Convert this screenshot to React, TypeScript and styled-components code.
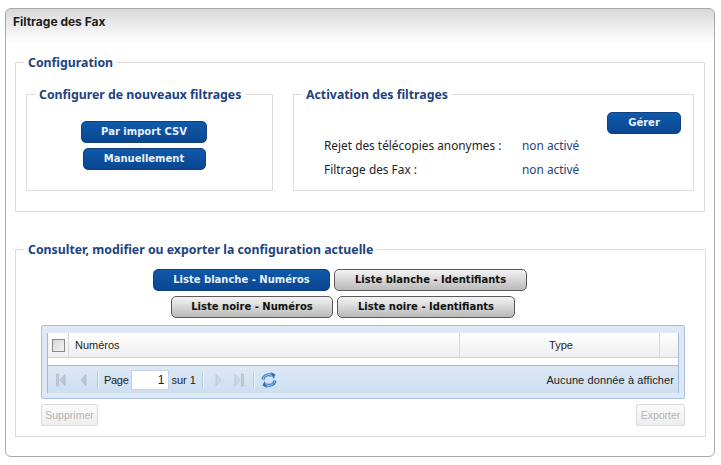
import React from 'react';
import styled, { createGlobalStyle } from 'styled-components';

const GlobalStyle = createGlobalStyle`
  html, body {
    margin: 0;
    padding: 0;
    background: #fff;
  }
`;

const Page = styled.div`
  padding: 8px 6px 8px 5px;
  width: 721px;
  height: 465px;
  box-sizing: border-box;
`;

const Panel = styled.div`
  box-sizing: border-box;
  width: 710px;
  height: 449px;
  border: 1px solid #a9a9a9;
  border-radius: 6px;
  background: linear-gradient(#d9d9d9 0, #ffffff 34px);
  padding: 0 9px;
`;

const Title = styled.h1`
  box-sizing: border-box;
  margin: 0 0 0 -2px;
  height: 44px;
  padding: 5px 0 0 0;
  font: bold 12px/15px Inter, "Noto Sans", sans-serif;
  color: #1c1c1c;
`;

const Box = styled.fieldset<{ $width: number; $height: number }>`
  box-sizing: border-box;
  margin: 0;
  padding: 0;
  width: ${p => p.$width}px;
  height: ${p => p.$height}px;
  border: 1px solid #dcdcdc;
  min-width: 0;
`;

const Legend = styled.legend`
  margin-left: 8px;
  padding: 2px 4px 0 4px;
  font: bold 12.3px/16px "Noto Sans", "Open Sans", sans-serif;
  color: #1c4480;
`;

const ConfigRow = styled.div`
  display: flex;
  gap: 20px;
  padding: 14px 0 0 10px;
`;

const CenterStack = styled.div`
  display: flex;
  flex-direction: column;
  align-items: center;
  gap: 5px;
  padding: 18px 11px 0 0;
`;

const Action = styled.button<{ $width: number; $tone?: 'blue' | 'grey' }>`
  box-sizing: border-box;
  width: ${p => p.$width}px;
  height: 22px;
  padding: 0;
  border-radius: 5px;
  border: 1px solid ${p => (p.$tone === 'grey' ? '#5a5a5a' : '#123f7e')};
  background: ${p =>
    p.$tone === 'grey'
      ? 'linear-gradient(#f4f4f4, #b9b9b9)'
      : 'linear-gradient(#0f5aaa, #0a4691)'};
  color: ${p => (p.$tone === 'grey' ? '#111' : '#e8f0fb')};
  font: bold 10px/18px "DejaVu Sans", sans-serif;
  white-space: nowrap;
`;

const ManageBar = styled.div`
  display: flex;
  justify-content: flex-end;
  padding: 9px 12px 0 0;
  margin-bottom: -1px;
`;

const StatusRow = styled.div`
  display: flex;
  height: 24px;
  padding-left: 30px;
  align-items: center;
  font: 11.85px/16px "Noto Sans", sans-serif;
  color: #222;
`;

const StatusLabel = styled.span`
  width: 198px;
`;

const StatusValue = styled.span`
  color: #1c4480;
`;

const Spacer = styled.div`
  height: 28px;
`;

const ListRows = styled.div`
  display: flex;
  flex-direction: column;
  gap: 5px;
  padding-top: 11px;
`;

const ListRow = styled.div<{ $left: number }>`
  display: flex;
  gap: 4px;
  padding-left: ${p => p.$left}px;
`;

const Grid = styled.div`
  box-sizing: border-box;
  margin: 7px 0 0 25px;
  width: 644px;
  height: 74px;
  padding: 7px 5px 5px;
  background: #dfe9f6;
  border: 1px solid #a9c1de;
  border-radius: 2px;
`;

const GridInner = styled.div`
  border: 1px solid #a3bbd6;
  border-top: 0;
  background: #fff;
  height: 100%;
  box-sizing: border-box;
`;

const HeadRow = styled.div`
  display: grid;
  grid-template-columns: 21px 391px 200px 1fr;
  height: 24px;
  background: linear-gradient(#ffffff, #eeeeee);
  border-bottom: 1px solid #d4d4d4;
`;

const HeadCell = styled.div<{ $center?: boolean }>`
  display: flex;
  align-items: center;
  justify-content: ${p => (p.$center ? 'center' : 'flex-start')};
  padding-left: ${p => (p.$center ? 3 : 6)}px;
  border-right: 1px solid #d8d8d8;
  font: 11px/14px "Liberation Sans", Arial, sans-serif;
  color: #222;
  &:last-child {
    border-right: 0;
  }
`;

const CheckBox = styled.span`
  display: block;
  box-sizing: border-box;
  width: 13px;
  height: 13px;
  margin-left: -2px;
  border: 1px solid #8a8a8a;
  background: linear-gradient(135deg, #d8d8d8, #f4f4f4);
`;

const EmptyBody = styled.div`
  height: 7px;
  border-bottom: 1px solid #a3bbd6;
`;

const Toolbar = styled.div`
  display: flex;
  align-items: center;
  height: 27px;
  background: linear-gradient(#dde8f5, #cddff1);
  font: 11px/14px "Liberation Sans", Arial, sans-serif;
  color: #222;
  padding-left: 8px;
`;

const Pager = styled.span<{ $left?: number }>`
  display: inline-flex;
  margin-left: ${p => p.$left ?? 0}px;
`;

const PageLabel = styled.span`
  margin-left: 6px;
  letter-spacing: -0.3px;
`;

const Divider = styled.span<{ $left: number }>`
  width: 1px;
  height: 18px;
  margin-left: ${p => p.$left}px;
  background: #b5cbe2;
  box-shadow: 1px 0 0 #eef4fb;
`;

const PageInput = styled.input`
  box-sizing: border-box;
  width: 38px;
  height: 20px;
  margin: 0 3px 0 2px;
  padding: 0 3px;
  border: 1px solid #c5d4e6;
  background: #fff;
  text-align: right;
  font: 12px/16px "Liberation Sans", Arial, sans-serif;
  color: #222;
`;

const Message = styled.span`
  margin-left: auto;
  padding-right: 4px;
  font: 11px/14px "Liberation Sans", Arial, sans-serif;
  letter-spacing: 0.1px;
`;

const FooterBar = styled.div`
  display: flex;
  justify-content: space-between;
  margin: 5px 0 0 25px;
  width: 644px;
`;

const Disabled = styled.button<{ $width: number }>`
  box-sizing: border-box;
  width: ${p => p.$width}px;
  height: 22px;
  padding: 0;
  border: 1px solid #dcdcdc;
  border-radius: 2px;
  background: linear-gradient(#fbfbfb, #eeeeee);
  color: #b4b4b4;
  font: 10.5px/18px "Liberation Sans", Arial, sans-serif;
`;

const FirstIcon = () => (
  <svg width="10" height="14" viewBox="0 0 10 14">
    <rect x="0.5" y="1" width="2" height="12" fill="#c3ccd6" stroke="#aab5c2" strokeWidth="0.6" />
    <path d="M9 1.5v11L4 7z" fill="#bcc6d1" stroke="#a5b0bd" strokeWidth="0.6" />
  </svg>
);

const PrevIcon = () => (
  <svg width="7" height="14" viewBox="0 0 7 14">
    <path d="M6 1.5v11L1 7z" fill="#bcc6d1" stroke="#a5b0bd" strokeWidth="0.6" />
  </svg>
);

const NextIcon = () => (
  <svg width="7" height="14" viewBox="0 0 7 14">
    <path d="M1 1.5v11L6 7z" fill="#cfd8e2" stroke="#b3bfcb" strokeWidth="0.6" />
  </svg>
);

const LastIcon = () => (
  <svg width="10" height="14" viewBox="0 0 10 14">
    <path d="M1 1.5v11L6 7z" fill="#cfd8e2" stroke="#b3bfcb" strokeWidth="0.6" />
    <rect x="7.5" y="1" width="2" height="12" fill="#c3ccd6" stroke="#aab5c2" strokeWidth="0.6" />
  </svg>
);

const RefreshIcon = () => (
  <svg width="16" height="16" viewBox="0 0 16 16" fill="none">
    <path d="M2 7.5C2.5 3.5 7 1.5 11 3.5" stroke="#2a70c2" strokeWidth="3" />
    <path d="M9.5 0l5 2.6-2 4.4z" fill="#2a70c2" />
    <path d="M2 7.5C2.5 3.5 7 1.5 11 3.5" stroke="#8cc6f2" strokeWidth="1.2" />
    <path d="M14 8.5C13.5 12.5 9 14.5 5 12.5" stroke="#2a70c2" strokeWidth="3" />
    <path d="M6.5 16l-5-2.6 2-4.4z" fill="#2a70c2" />
    <path d="M14 8.5C13.5 12.5 9 14.5 5 12.5" stroke="#8cc6f2" strokeWidth="1.2" />
  </svg>
);

export default function App() {
  return (
    <>
      <GlobalStyle />
      <Page>
        <Panel>
          <Title>Filtrage des Fax</Title>
          <Box $width={690} $height={159}>
            <Legend>Configuration</Legend>
            <ConfigRow>
              <Box $width={247} $height={106}>
                <Legend>Configurer de nouveaux filtrages</Legend>
                <CenterStack>
                  <Action $width={126}>Par import CSV</Action>
                  <Action $width={123}>Manuellement</Action>
                </CenterStack>
              </Box>
              <Box $width={401} $height={106}>
                <Legend>Activation des filtrages</Legend>
                <ManageBar>
                  <Action $width={74}>Gérer</Action>
                </ManageBar>
                <StatusRow>
                  <StatusLabel>Rejet des télécopies anonymes :</StatusLabel>
                  <StatusValue>non activé</StatusValue>
                </StatusRow>
                <StatusRow>
                  <StatusLabel>Filtrage des Fax :</StatusLabel>
                  <StatusValue>non activé</StatusValue>
                </StatusRow>
              </Box>
            </ConfigRow>
          </Box>
          <Spacer />
          <Box $width={691} $height={197}>
            <Legend>Consulter, modifier ou exporter la configuration actuelle</Legend>
            <ListRows>
              <ListRow $left={137}>
                <Action $width={177}>Liste blanche - Numéros</Action>
                <Action $width={193} $tone="grey">Liste blanche - Identifiants</Action>
              </ListRow>
              <ListRow $left={155}>
                <Action $width={162} $tone="grey">Liste noire - Numéros</Action>
                <Action $width={178} $tone="grey">Liste noire - Identifiants</Action>
              </ListRow>
            </ListRows>
            <Grid>
              <GridInner>
                <HeadRow>
                  <HeadCell><CheckBox /></HeadCell>
                  <HeadCell>Numéros</HeadCell>
                  <HeadCell $center>Type</HeadCell>
                  <HeadCell />
                </HeadRow>
                <EmptyBody />
                <Toolbar>
                  <Pager><FirstIcon /></Pager>
                  <Pager $left={14}><PrevIcon /></Pager>
                  <Divider $left={10} />
                  <PageLabel>Page</PageLabel>
                  <PageInput readOnly value="1" />
                  sur 1
                  <Divider $left={6} />
                  <Pager $left={12}><NextIcon /></Pager>
                  <Pager $left={12}><LastIcon /></Pager>
                  <Divider $left={9} />
                  <Pager $left={7}><RefreshIcon /></Pager>
                  <Message>Aucune donnée à afficher</Message>
                </Toolbar>
              </GridInner>
            </Grid>
            <FooterBar>
              <Disabled $width={57}>Supprimer</Disabled>
              <Disabled $width={49}>Exporter</Disabled>
            </FooterBar>
          </Box>
        </Panel>
      </Page>
    </>
  );
}
